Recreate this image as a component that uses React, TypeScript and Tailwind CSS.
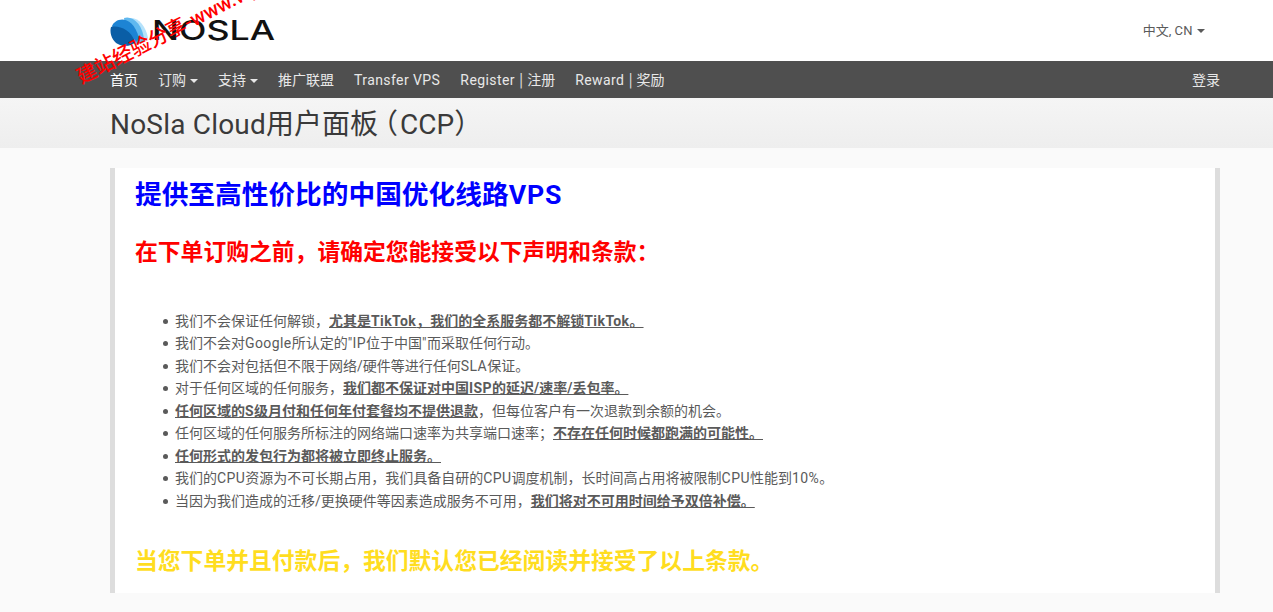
const Caret = () => (
  <span className="ml-[4px] inline-block align-[2px] border-x-[4px] border-t-[4px] border-x-transparent border-t-current" />
);

// latin runs come out wider in the original, so they get a bit of tracking
const L = ({ children }: { children: React.ReactNode }) => (
  <span className="tracking-[0.42px]">{children}</span>
);

const Pipe = () => <span className="mx-[4px] align-[-1px] text-[19px] leading-none font-light">|</span>;

const Logo = () => (
  <div className="flex items-center">
    <svg width="38" height="30" viewBox="0 0 38 30" className="mt-[1px]">
      <path d="M20 2 C28 1 36 10 38 22 C34 28 28 27 24 25 Z" fill="#b5e2fb" />
      <path d="M14 2 C22 -1 33 8 34 24 C30 30 22 28 18 24 Z" fill="#5fb8ef" />
      <path d="M2 10 C5 2 22 -3 29 22 C27 28 18 30 12 28 Z" fill="#1d84d4" />
      <path d="M1 11 C8 9 21 13 25 26 C22 30 15 31 10 29 C3 27 -1 18 1 11 Z" fill="#0a5ea6" />
    </svg>
    <span className="ml-[4px] w-[122px] origin-left scale-x-[1.3] text-[27.5px] leading-none font-medium text-[#111] font-['Inter',sans-serif]">NOSLA</span>
  </div>
);

const Header = () => (
  <header className="h-[61px] bg-white">
    <div className="ml-[110px] flex h-full w-[1110px] items-center justify-between">
      <Logo />
      <a className="mr-[15px] text-[13px] text-[#5a5a5a]">中文, <L>CN</L><Caret /></a>
    </div>
  </header>
);

const navItems = [
  { label: <>首页</>, active: true },
  { label: <>订购</>, caret: true },
  { label: <>支持</>, caret: true },
  { label: <>推广联盟</> },
  { label: <L>Transfer VPS</L> },
  { label: <><L>Register</L><Pipe />注册</> },
  { label: <><L>Reward</L><Pipe />奖励</> },
];

const Nav = () => (
  <nav className="h-[37px] bg-[#4f4f4f] text-[14px] text-[#e8e8e8]">
    <div className="ml-[110px] flex h-full w-[1110px] items-center justify-between pt-[1px]">
      <ul className="flex gap-[20px]">
        {navItems.map((item, i) => (
          <li key={i} className={item.active ? 'text-white' : ''}>
            {item.label}
            {item.caret && <Caret />}
          </li>
        ))}
      </ul>
      <a>登录</a>
    </div>
  </nav>
);

const rules = [
  <>我们不会保证任何解锁，<b>尤其是<L>TikTok</L>，我们的全系服务都不解锁<L>TikTok</L>。</b></>,
  <>我们不会对<L>Google</L>所认定的<L>"IP</L>位于中国<L>"</L>而采取任何行动。</>,
  <>我们不会对包括但不限于网络/硬件等进行任何<L>SLA</L>保证。</>,
  <>对于任何区域的任何服务，<b>我们都不保证对中国<L>ISP</L>的延迟/速率/丢包率。</b></>,
  <><b>任何区域的<L>S</L>级月付和任何年付套餐均不提供退款</b>，但每位客户有一次退款到余额的机会。</>,
  <>任何区域的任何服务所标注的网络端口速率为共享端口速率；<b>不存在任何时候都跑满的可能性。</b></>,
  <><b>任何形式的发包行为都将被立即终止服务。</b></>,
  <>我们的<L>CPU</L>资源为不可长期占用，我们具备自研的<L>CPU</L>调度机制，长时间高占用将被限制<L>CPU</L>性能到<L>10%</L>。</>,
  <>当因为我们造成的迁移/更换硬件等因素造成服务不可用，<b>我们将对不可用时间给予双倍补偿。</b></>,
];

export default function App() {
  return (
    <div className="relative min-h-screen overflow-hidden bg-[#fafafa] font-['Roboto','Noto_Sans_CJK_SC',sans-serif]">
      <Header />
      <Nav />
      <div className="h-[50px] bg-gradient-to-b from-[#f5f5f5] to-[#eeeeee]">
        <h1 className="ml-[110px] text-[28px] leading-[54px] text-[#3a3a3a]"><span className="tracking-[0.2px]">NoSla Cloud</span>用户面板<span className="-ml-[8px] tracking-[2px]">（</span>CCP）</h1>
      </div>
      <main className="ml-[110px] mt-[20px] h-[425px] w-[1110px] border-x-[5px] border-[#dddddd] bg-white px-[20px]">
        <h2 className="pt-[10px] text-[26.7px] leading-[34px] font-bold text-[#0000ff]">提供至高性价比的中国优化线路<span className="tracking-[0.9px]">VPS</span></h2>
        <h3 className="mt-[26px] text-[22.8px] leading-[30px] font-bold text-[#ff0000]">在下单订购之前，请确定您能接受以下声明和条款：</h3>
        <ul className="mt-[41.6px] pl-[40px] text-[14px] leading-[22.5px] text-[#5a5a5a] [&_b]:underline">
          {rules.map((rule, i) => (
            <li key={i} className="relative before:absolute before:left-[-12px] before:top-[9px] before:size-[5px] before:rounded-full before:bg-[#5a5a5a]">{rule}</li>
          ))}
        </ul>
        <p className="mt-[35.4px] text-[22.8px] leading-[30px] font-bold text-[#ffdd1f]">当您下单并且付款后，我们默认您已经阅读并接受了以上条款。</p>
      </main>
      <div className="absolute left-[78px] top-[68px] origin-left -rotate-[27deg] whitespace-nowrap text-[20px] leading-none font-medium text-[#ff0000]">
        建站经验分享-www.wpjzb.com
      </div>
    </div>
  );
}
